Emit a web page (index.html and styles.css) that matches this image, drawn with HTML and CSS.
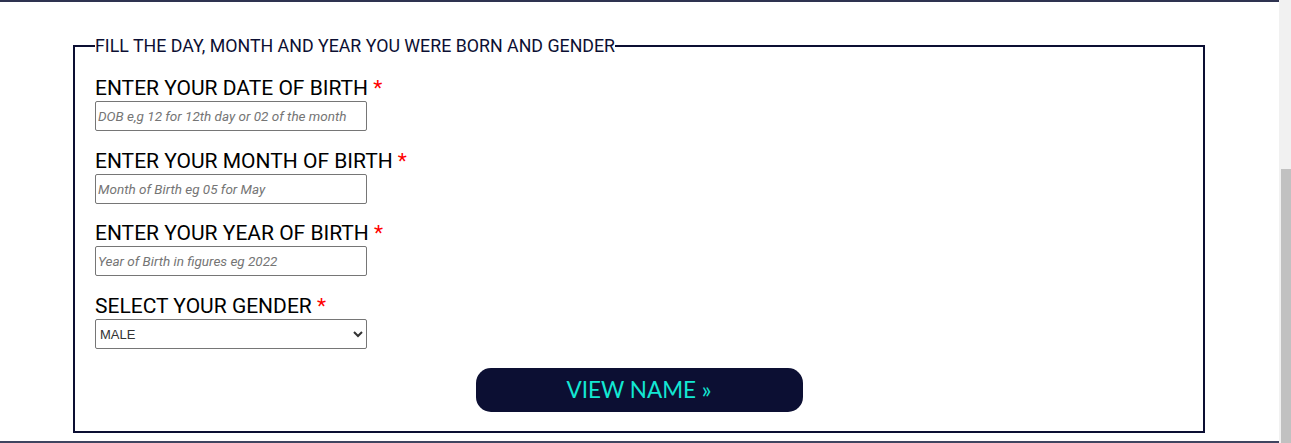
FILE: index.html
```html
<!DOCTYPE html>
<html lang="en">
<head>
<meta charset="utf-8">
<title>Name Finder</title>
<link rel="stylesheet" href="styles.css">
</head>
<body>
<div class="page">
  <main class="main">
    <form class="form">
      <fieldset class="box">
        <legend class="legend">FILL THE DAY, MONTH AND YEAR YOU WERE BORN AND GENDER</legend>
        <div class="group">
          <label class="label" for="dob">ENTER YOUR DATE OF BIRTH <span class="req">*</span></label>
          <input class="field" id="dob" type="text" placeholder="DOB e,g 12 for 12th day or 02 of the month">
        </div>
        <div class="group">
          <label class="label" for="mob">ENTER YOUR MONTH OF BIRTH <span class="req">*</span></label>
          <input class="field" id="mob" type="text" placeholder="Month of Birth eg 05 for May">
        </div>
        <div class="group">
          <label class="label" for="yob">ENTER YOUR YEAR OF BIRTH <span class="req">*</span></label>
          <input class="field" id="yob" type="text" placeholder="Year of Birth in figures eg 2022">
        </div>
        <div class="group">
          <label class="label" for="gender">SELECT YOUR GENDER <span class="req">*</span></label>
          <select class="field select" id="gender">
            <option>MALE</option>
            <option>FEMALE</option>
          </select>
        </div>
        <div class="actions">
          <button class="btn" type="button">VIEW NAME &raquo;</button>
        </div>
      </fieldset>
    </form>
  </main>
  <div class="scrollbar"><div class="thumb"></div></div>
</div>
</body>
</html>
```
FILE: styles.css
```css
* { box-sizing: border-box; }
html, body { margin: 0; padding: 0; background: #fff; }
body { font-family: Roboto, "Liberation Sans", sans-serif; overflow: hidden; }

.page {
  display: flex;
  height: 443px;
}
.main {
  flex: 1;
  border-top: 2px solid #2e3350;
  border-bottom: 2px solid #3f4560;
  display: flex;
  flex-direction: column;
}
.form {
  margin: 34px 0 0 73px;
  width: 1132px;
}
.box {
  margin: 0;
  border: 2px solid #0c0f33;
  padding: 20px 20px 19px 20px;
  min-width: 0;
}
.legend {
  padding: 0;
  font-size: 17.8px;
  line-height: 20px;
  color: #0c0f33;
  margin-left: 0;
}
.group {
  margin-bottom: 17.7px;
}
.label {
  display: block;
  font-size: 21px;
  line-height: 24px;
  color: #000;
  margin-bottom: 1px;
}
.req { color: #ff0000; }
.field {
  display: block;
  width: 272px;
  height: 30px;
  border: 1px solid #767676;
  border-radius: 2px;
  padding: 1px 2px;
  font-family: Roboto, "Liberation Sans", sans-serif;
  font-size: 13.5px;
  background: #fff;
}
.field::placeholder {
  color: #757575;
  font-style: italic;
}
.select {
  font-family: "Liberation Sans", Arial, sans-serif;
  font-size: 13px;
  color: #333;
  padding-left: 0;
}
.actions {
  display: flex;
  justify-content: center;
  margin-top: 19px;
}
.btn {
  width: 327px;
  height: 44px;
  border: 0;
  border-radius: 15px;
  background: #0c0f33;
  color: #13e8d3;
  font-family: Lato, "Open Sans", sans-serif;
  font-size: 22.5px;
  padding: 0 0 2px;
}
.scrollbar {
  width: 12px;
  background: #f1f1f1;
  display: flex;
  flex-direction: column;
  align-items: flex-end;
  padding-top: 169px;
}
.thumb {
  width: 10px;
  flex: 1;
  background: #c1c1c1;
}
```
